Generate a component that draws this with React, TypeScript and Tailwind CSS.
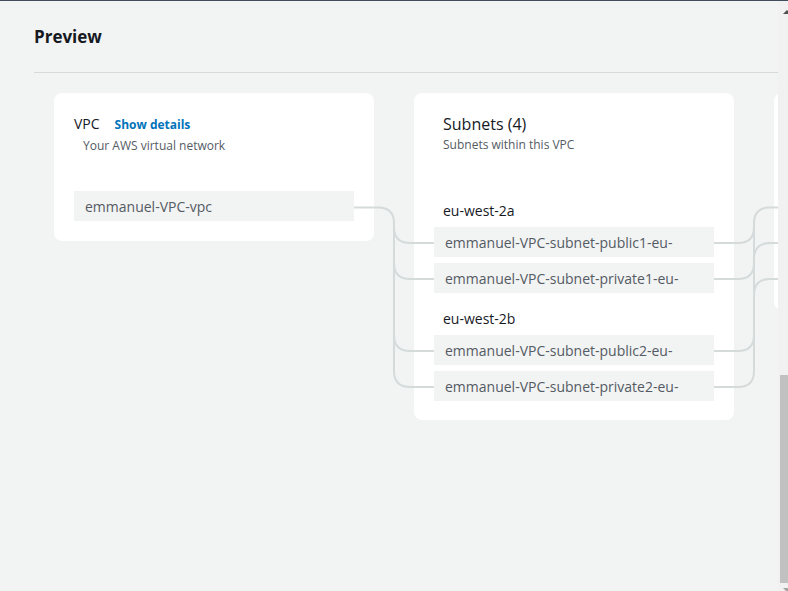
import React from "react";

const font = { fontFamily: '"Open Sans", "Noto Sans", Arial, sans-serif' };

function NameBox({ label }: { label: string }) {
  return (
    <div className="h-[30px] w-[280px] bg-[#f2f3f3] pl-[11px] flex items-center text-[14px] text-[#545b64] whitespace-nowrap overflow-hidden">
      {label}
    </div>
  );
}

const zones = [
  {
    zone: "eu-west-2a",
    subnets: ["emmanuel-VPC-subnet-public1-eu-", "emmanuel-VPC-subnet-private1-eu-"],
  },
  {
    zone: "eu-west-2b",
    subnets: ["emmanuel-VPC-subnet-public2-eu-", "emmanuel-VPC-subnet-private2-eu-"],
  },
];

function Connectors() {
  const line = { fill: "none", stroke: "#d5dbdb", strokeWidth: 2 };
  return (
    <svg
      className="absolute left-0 top-0 pointer-events-none"
      width="778"
      height="591"
      viewBox="0 0 778 591"
    >
      {/* vpc -> subnets */}
      <path {...line} d="M354 206.5 H378 Q394 206.5 394 222 V370 Q394 386 410 386 H434" />
      <path {...line} d="M394 226 Q394 242 410 242 H434" />
      <path {...line} d="M394 262 Q394 278 410 278 H434" />
      <path {...line} d="M394 334 Q394 350 410 350 H434" />
      {/* subnets -> route tables */}
      <path {...line} d="M714 386 H738 Q754 386 754 370 V222 Q754 206.5 770 206.5 H778" />
      <path {...line} d="M714 242 H738 Q754 242 754 226" />
      <path {...line} d="M714 278 H738 Q754 278 754 262" />
      <path {...line} d="M714 350 H738 Q754 350 754 334" />
      <path {...line} d="M754 258 Q754 242 770 242 H778" />
      <path {...line} d="M754 294 Q754 278 770 278 H778" />
    </svg>
  );
}

export default function App() {
  return (
    <div
      className="relative w-[788px] h-[591px] overflow-hidden bg-[#f2f3f3] border-t border-[#414d5c] flex"
      style={font}
    >
      <div className="relative w-[778px] shrink-0 flex flex-col">
        <h2 className="ml-[34px] mt-[25px] text-[17px] leading-[22px] font-bold text-[#16191f]">
          Preview
        </h2>
        <div className="ml-[34px] mt-[24px] h-px bg-[#d5dbdb]" />

        <div className="flex gap-[40px] pl-[54px] pt-[20px] overflow-hidden">
          {/* VPC */}
          <div className="w-[320px] shrink-0 self-start bg-white rounded-[8px] px-[20px] pt-[20px] pb-[20px]">
            <div className="flex items-baseline gap-[15px] leading-[22px]">
              <span className="text-[14px] text-[#16191f]">VPC</span>
              <span className="text-[12px] font-bold text-[#0073bb]">Show details</span>
            </div>
            <div className="mt-[2px] pl-[9px] text-[12px] leading-[16px] text-[#545b64]">
              Your AWS virtual network
            </div>
            <div className="mt-[37px]">
              <NameBox label="emmanuel-VPC-vpc" />
            </div>
          </div>

          {/* Subnets */}
          <div className="w-[320px] shrink-0 self-start bg-white rounded-[8px] px-[20px] pt-[20px] pb-[19px]">
            <div className="pl-[9px]">
              <div className="text-[16px] leading-[22px] text-[#16191f]">Subnets (4)</div>
              <div className="mt-[2px] text-[12px] leading-[16px] text-[#545b64]">
                Subnets within this VPC
              </div>
            </div>
            <div className="mt-[48px] flex flex-col gap-[16px]">
              {zones.map((z) => (
                <div key={z.zone} className="flex flex-col gap-[6px]">
                  <div className="pl-[9px] text-[14px] leading-[20px] text-[#16191f]">{z.zone}</div>
                  {z.subnets.map((s) => (
                    <NameBox key={s} label={s} />
                  ))}
                </div>
              ))}
            </div>
          </div>

          {/* Route tables (cut off) */}
          <div className="w-[320px] h-[217px] shrink-0 bg-white rounded-[8px]" />
        </div>

        <Connectors />
      </div>

      {/* scrollbar */}
      <div className="relative w-[10px] shrink-0 bg-[#f1f1f1]">
        <div className="absolute left-[5px] top-[9px] w-0 h-0 border-l-[4px] border-r-[4px] border-b-[4px] border-l-transparent border-r-transparent border-b-[#505050]" />
        <div className="absolute left-[2px] right-0 top-[374px] h-[208px] bg-[#c1c1c1]" />
        <div className="absolute left-[5px] top-[587px] w-0 h-0 border-l-[4px] border-r-[4px] border-t-[4px] border-l-transparent border-r-transparent border-t-[#a3a3a3]" />
      </div>
    </div>
  );
}
